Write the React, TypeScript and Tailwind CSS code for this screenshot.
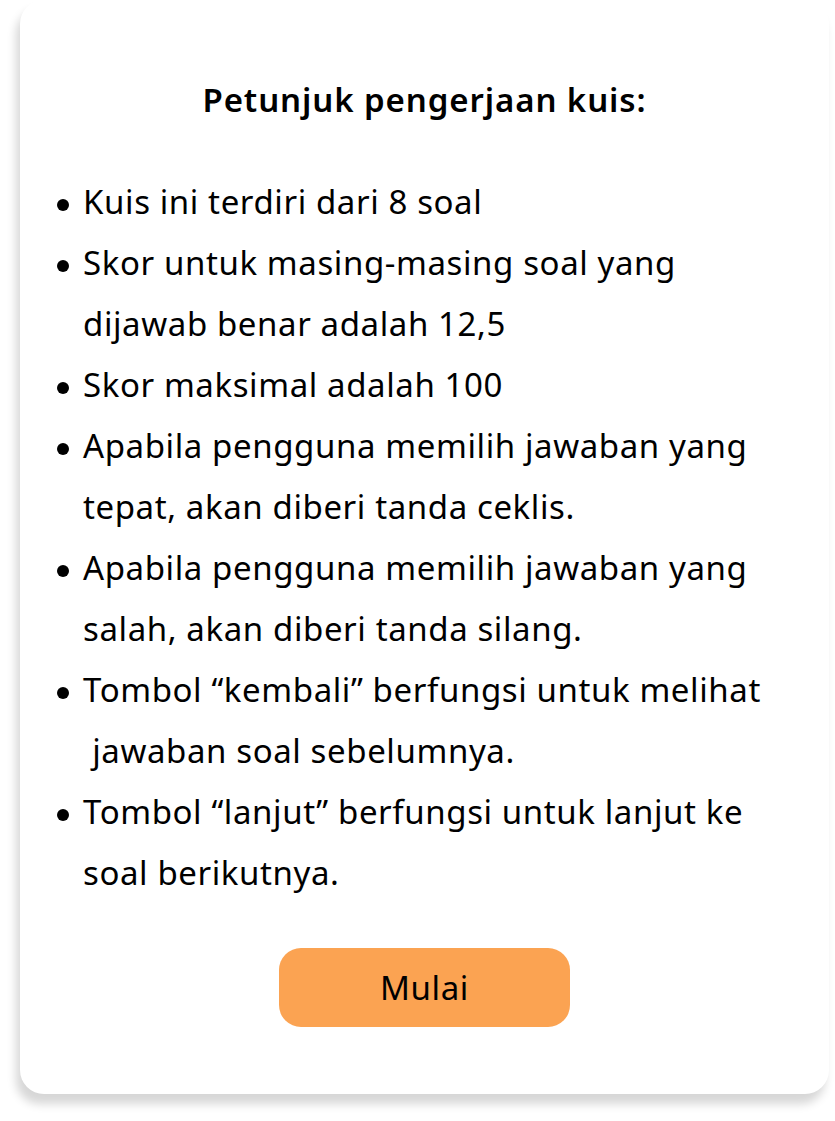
const items: string[][] = [
  ['Kuis ini terdiri dari 8 soal'],
  ['Skor untuk masing-masing soal yang', 'dijawab benar adalah 12,5'],
  ['Skor maksimal adalah 100'],
  ['Apabila pengguna memilih jawaban yang', 'tepat, akan diberi tanda ceklis.'],
  ['Apabila pengguna memilih jawaban yang', 'salah, akan diberi tanda silang.'],
  ['Tombol “kembali” berfungsi untuk melihat', '\u00a0jawaban soal sebelumnya.'],
  ['Tombol “lanjut” berfungsi untuk lanjut ke', 'soal berikutnya.'],
]

const App = () => {
  return (
    <div className="h-[1121px] w-[835px] overflow-hidden bg-white font-['Noto_Sans','Lato',sans-serif] text-black">
      <div className="ml-[20px] w-[809px] rounded-[24px] bg-white pt-[69px] pb-[67px] shadow-[-4px_10px_10px_rgba(0,0,0,0.16)]">
        <h1 className="text-center text-[33px] leading-[61px] font-semibold tracking-[0.9px]">
          Petunjuk pengerjaan kuis:
        </h1>

        <ul className="mt-[41px] pl-[37px]">
          {items.map((lines) => (
            <li key={lines[0]} className="flex">
              <span className="flex h-[61px] w-[26px] shrink-0 items-center">
                <span className="mt-[6px] h-[12px] w-[12px] rounded-full bg-black" />
              </span>
              <div className="text-[33px] leading-[61px] tracking-[0.6px]">
                {lines.map((line) => (
                  <div key={line}>{line}</div>
                ))}
              </div>
            </li>
          ))}
        </ul>

        <div className="mt-[45px] flex justify-center">
          <button className="h-[79px] w-[291px] rounded-[22px] bg-[#fba352] text-[33px] tracking-[0.6px]">
            Mulai
          </button>
        </div>
      </div>
    </div>
  )
}

export default App
